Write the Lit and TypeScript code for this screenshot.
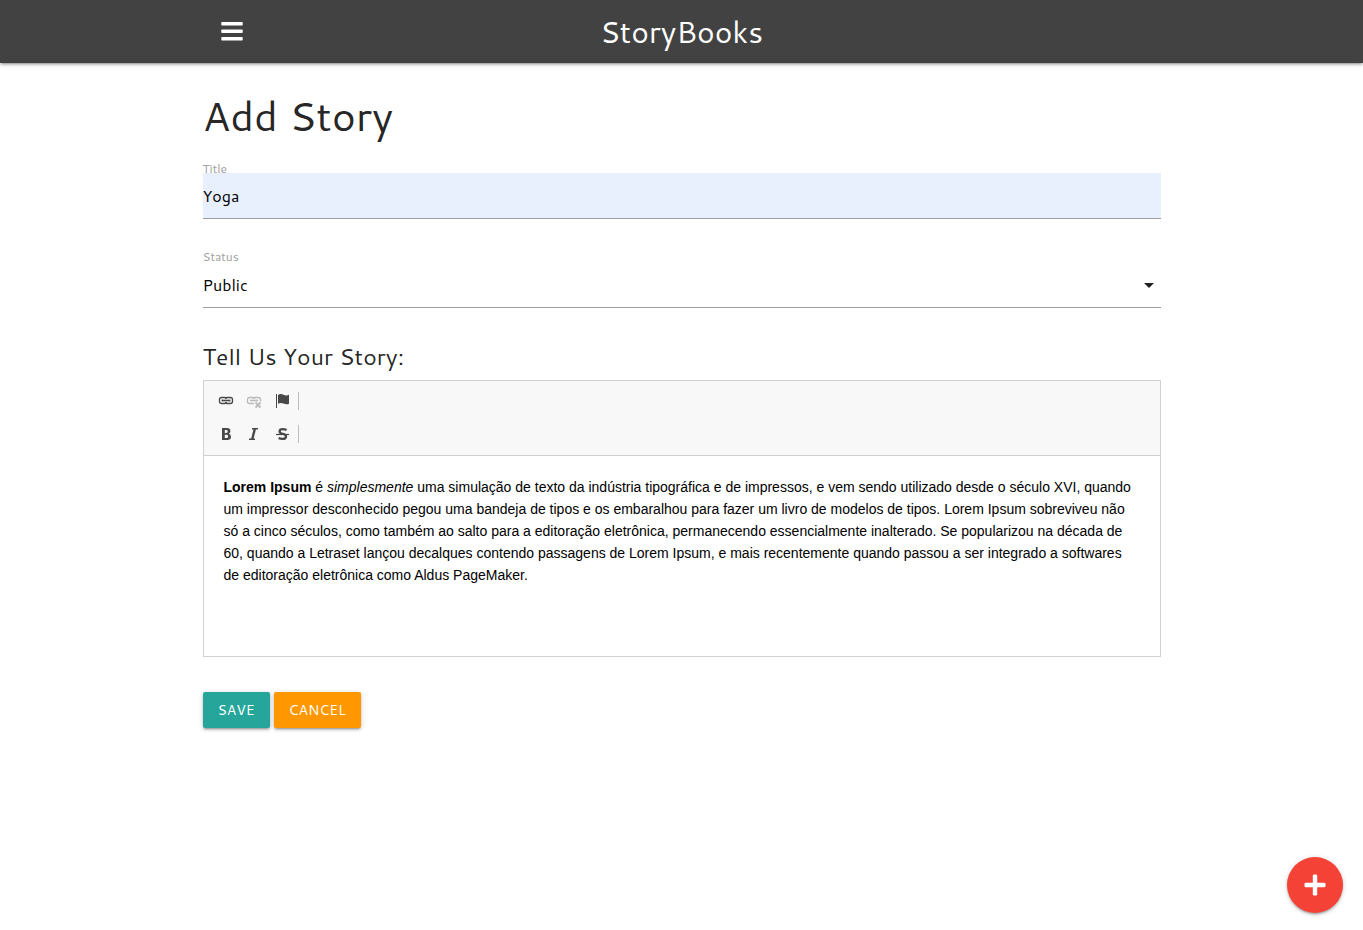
import { LitElement, html, css } from "lit";
import { customElement } from "lit/decorators.js";

@customElement("app-root")
export class AppRoot extends LitElement {
  static styles = css`
    :host {
      display: block;
      min-height: 100vh;
      font-family: Cantarell, "Noto Sans", sans-serif;
      color: rgba(0, 0, 0, 0.87);
      background: #fff;
    }
    *,
    *::before,
    *::after {
      box-sizing: border-box;
    }
    .container {
      width: 90%;
      max-width: 958px;
      margin: 0 auto;
    }
    .nav {
      background: #424242;
      box-shadow: 0 2px 2px 0 rgba(0, 0, 0, 0.14), 0 3px 1px -2px rgba(0, 0, 0, 0.12), 0 1px 5px 0 rgba(0, 0, 0, 0.2);
    }
    .nav-row {
      display: grid;
      grid-template-columns: 1fr auto 1fr;
      align-items: center;
      height: 63px;
    }
    .menu {
      justify-self: start;
      display: flex;
      margin: 0 0 0 18px;
      padding: 0;
      border: 0;
      background: none;
      color: #fff;
    }
    .brand {
      color: #fff;
      font-size: 30px;
      line-height: 63px;
      text-decoration: none;
    }
    .title {
      margin: 28px 0 22px;
      font-size: 41px;
      font-weight: 400;
      line-height: 48px;
    }
    .field {
      display: flex;
      flex-direction: column;
      margin-bottom: 32px;
    }
    .label {
      color: #9e9e9e;
      font-size: 12px;
      line-height: 16px;
    }
    .control {
      width: 100%;
      height: 46px;
      margin: 0;
      padding: 0;
      border: 0;
      border-bottom: 1px solid #9e9e9e;
      border-radius: 0;
      outline: none;
      background: transparent;
      color: #000;
      font-family: inherit;
      font-size: 16px;
      appearance: none;
    }
    .filled {
      margin-top: -4px;
      margin-bottom: -2px;
      background: #e8f0fe;
    }
    .select-wrap {
      display: grid;
      align-items: center;
      margin-top: -3px;
    }
    .select-wrap > * {
      grid-area: 1 / 1;
    }
    .caret {
      justify-self: end;
      pointer-events: none;
    }
    .subtitle {
      margin: 0 0 8px;
      font-size: 23px;
      font-weight: 400;
      line-height: 32px;
    }
    .editor {
      border: 1px solid #d1d1d1;
    }
    .toolbar {
      display: flex;
      flex-direction: column;
      gap: 7px;
      padding: 7px 8px 8px;
      border-bottom: 1px solid #d1d1d1;
      background: #f8f8f8;
    }
    .tools {
      display: flex;
      align-items: center;
    }
    .tool {
      display: flex;
      padding: 5px 6px;
      border: 0;
      background: none;
      color: #484848;
    }
    .tool:disabled {
      opacity: 0.35;
    }
    .divider {
      width: 1px;
      height: 18px;
      background: #bcbcbc;
      margin-left: 2px;
    }
    .content {
      min-height: 200px;
      padding: 20px;
      color: #000;
      font-family: "Liberation Sans", Arial, sans-serif;
      font-size: 14px;
      line-height: 22px;
      outline: none;
    }
    .text {
      margin: 0;
    }
    .actions {
      display: flex;
      gap: 4px;
      margin-top: 35px;
    }
    .btn {
      height: 36px;
      padding: 0 15px;
      border: 0;
      border-radius: 2px;
      background: #26a69a;
      color: #fff;
      font-family: inherit;
      font-size: 14px;
      line-height: 36px;
      text-decoration: none;
      text-transform: uppercase;
      box-shadow: 0 2px 2px 0 rgba(0, 0, 0, 0.14), 0 3px 1px -2px rgba(0, 0, 0, 0.12), 0 1px 5px 0 rgba(0, 0, 0, 0.2);
    }
    .orange {
      background: #ff9800;
    }
    .fab {
      position: fixed;
      right: 20px;
      bottom: 17px;
      display: flex;
      align-items: center;
      justify-content: center;
      width: 56px;
      height: 56px;
      border-radius: 50%;
      background: #f44336;
      color: #fff;
      box-shadow: 0 2px 2px 0 rgba(0, 0, 0, 0.14), 0 3px 1px -2px rgba(0, 0, 0, 0.12), 0 1px 5px 0 rgba(0, 0, 0, 0.2);
    }
  `;

  render() {
    return html`
      <nav class="nav">
        <div class="container nav-row">
          <button class="menu" type="button" aria-label="Menu">
            <svg width="22" height="20" viewBox="0 0 22 20" fill="currentColor">
              <rect x="0.3" y="0" width="21.4" height="3.5" rx="0.8" />
              <rect x="0.3" y="7.5" width="21.4" height="3.5" rx="0.8" />
              <rect x="0.3" y="15" width="21.4" height="3.5" rx="0.8" />
            </svg>
          </button>
          <a class="brand" href="#">StoryBooks</a>
        </div>
      </nav>

      <main class="container">
        <h1 class="title">Add Story</h1>
        <form>
          <div class="field">
            <label class="label" for="title">Title</label>
            <input class="control filled" id="title" type="text" value="Yoga" />
          </div>
          <div class="field">
            <label class="label" for="status">Status</label>
            <div class="select-wrap">
              <select class="control" id="status">
                <option selected>Public</option>
              </select>
              <svg class="caret" width="24" height="24" viewBox="0 0 24 24" fill="#212121">
                <path d="M7 10l5 5 5-5z" />
              </svg>
            </div>
          </div>

          <h2 class="subtitle" id="story-label">Tell Us Your Story:</h2>
          <div class="editor">
            <div class="toolbar">
              <div class="tools">
                <button class="tool" type="button" aria-label="Link">
                  <svg width="16" height="16" viewBox="0 0 16 16" fill="none" stroke="currentColor" stroke-width="1.3">
                    <path d="M7 10.5H3.8Q1.5 10.5 1.5 8.5V6.5Q1.5 4.5 3.8 4.5H7Q8.3 4.5 8.5 5.8M9 4.5H12.2Q14.5 4.5 14.5 6.5V8.5Q14.5 10.5 12.2 10.5H9Q7.7 10.5 7.5 9.2M7 10.5Q8.3 10.5 8.5 9.2M9 4.5Q7.7 4.5 7.5 5.8" />
                    <path d="M4 6.5V8.5M12 6.5V8.5" stroke-width="0.8" />
                    <path d="M4 7.5h8" stroke-width="1.6" />
                  </svg>
                </button>
                <button class="tool" type="button" aria-label="Unlink" disabled>
                  <svg width="16" height="16" viewBox="0 0 16 16" fill="none" stroke="currentColor" stroke-width="1.3">
                    <path d="M8 10.5H3.8Q1.5 10.5 1.5 8.5V6.5Q1.5 4.5 3.8 4.5H7Q8.3 4.5 8.5 5.8M7.5 5.8Q7.7 4.5 9 4.5H12.2Q14.5 4.5 14.5 6.5V8.5" />
                    <path d="M4 7.5h8" stroke-width="1.6" />
                    <path d="M9.5 9.5l5 5M14.5 9.5l-5 5" stroke-width="1.8" />
                  </svg>
                </button>
                <button class="tool" type="button" aria-label="Anchor">
                  <svg width="16" height="16" viewBox="0 0 16 16" fill="currentColor">
                    <path d="M2 1h1v14H2zM4 2Q6.5 0.2 9.5 1.8T15 1.8V10.8Q12.5 12 9.5 10.6T4 10.8z" />
                  </svg>
                </button>
                <span class="divider"></span>
              </div>
              <div class="tools">
                <button class="tool" type="button" aria-label="Bold">
                  <svg width="16" height="16" viewBox="0 0 16 16" fill="currentColor" fill-rule="evenodd">
                    <path d="M4 2H9Q12.4 2 12.4 5 12.4 7 10.8 7.7 13 8.3 13 10.7 13 14 9.2 14H4zM6.8 4.1V6.9H8.4Q9.7 6.9 9.7 5.5T8.4 4.1zM6.8 8.8V11.9H8.7Q10.2 11.9 10.2 10.3T8.7 8.8z" />
                  </svg>
                </button>
                <button class="tool" type="button" aria-label="Italic">
                  <svg width="16" height="16" viewBox="0 0 16 16" fill="none" stroke="currentColor">
                    <path d="M8.8 3L6.3 13" stroke-width="2.4" />
                    <path d="M6 2.8h6M3 13.2h6" stroke-width="1.6" />
                  </svg>
                </button>
                <button class="tool" type="button" aria-label="Strikethrough">
                  <svg width="16" height="16" viewBox="0 0 16 16" fill="none" stroke="currentColor">
                    <path d="M12.6 4Q10.8 3.1 8.8 3.1 5.6 3.1 5.6 5.4 5.6 7.2 8.8 7.8 12 8.4 12 10.4 12 12.9 8.4 12.9 6.3 12.9 4.6 12" stroke-width="2.3" />
                    <path d="M2 8.5h13" stroke-width="1.2" />
                  </svg>
                </button>
                <span class="divider"></span>
              </div>
            </div>
            <div class="content" contenteditable="true" role="textbox" aria-multiline="true" aria-labelledby="story-label" spellcheck="false">
              <p class="text"><strong>Lorem Ipsum</strong> é <em>simplesmente</em> uma simulação de texto da indústria tipográfica e de impressos, e vem sendo utilizado desde o século XVI, quando um impressor desconhecido pegou uma bandeja de tipos e os embaralhou para fazer um livro de modelos de tipos. Lorem Ipsum sobreviveu não só a cinco séculos, como também ao salto para a editoração eletrônica, permanecendo essencialmente inalterado. Se popularizou na década de 60, quando a Letraset lançou decalques contendo passagens de Lorem Ipsum, e mais recentemente quando passou a ser integrado a softwares de editoração eletrônica como Aldus PageMaker.</p>
            </div>
          </div>

          <div class="actions">
            <button class="btn" type="submit">Save</button>
            <a class="btn orange" href="#">Cancel</a>
          </div>
        </form>
      </main>

      <a class="fab" href="#" aria-label="Add story">
        <svg width="22" height="22" viewBox="0 0 22 22" fill="currentColor">
          <rect x="0.5" y="8.8" width="21" height="4.4" rx="1.3" />
          <rect x="8.8" y="0.5" width="4.4" height="21" rx="1.3" />
        </svg>
      </a>
    `;
  }
}
